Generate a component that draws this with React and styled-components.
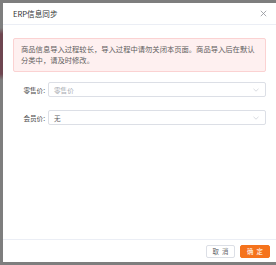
import React from 'react';
import styled, { createGlobalStyle } from 'styled-components';

const GlobalStyle = createGlobalStyle`
  html, body {
    margin: 0;
    padding: 0;
    width: 276px;
    height: 265px;
    overflow: hidden;
    background: linear-gradient(to bottom, #7e7e7e 0px, #7e7e7e 28px, #6e4650 34px, #6e4650 74px, #7e7e7e 80px);
    font-family: "Noto Sans CJK SC", "Liberation Sans", sans-serif;
  }
`;

const Dialog = styled.div`
  margin: 3px 0 0 3px;
  width: 273px;
  height: 259px;
  background: #fff;
  display: flex;
  flex-direction: column;
  box-sizing: border-box;
`;

const Header = styled.div`
  height: 22px;
  border-bottom: 1px solid #ebeef5;
  display: flex;
  align-items: center;
  justify-content: space-between;
  padding: 0 8px 0 10px;
  box-sizing: border-box;
`;

const Title = styled.span`
  font-size: 7.6px;
  color: #303133;
`;

const Close = styled.button`
  border: none;
  background: none;
  padding: 0;
  width: 10px;
  height: 10px;
  display: flex;
  align-items: center;
  justify-content: center;
  cursor: pointer;
`;

const Body = styled.div`
  flex: 1;
  padding: 13px 10px 0 10px;
  display: flex;
  flex-direction: column;
`;

const Alert = styled.div`
  background: #fef0f0;
  border: 1px solid #fbd2d2;
  border-radius: 2px;
  padding: 5px 7px;
  font-size: 7.3px;
  line-height: 11px;
  color: #5e5e5e;
  box-sizing: border-box;
  height: 34px;
`;

const Form = styled.div`
  display: flex;
  flex-direction: column;
  gap: 13px;
  margin-top: 10px;
`;

const Row = styled.div`
  display: flex;
  align-items: center;
`;

const Label = styled.span`
  width: 32px;
  text-align: right;
  font-size: 6.6px;
  color: #4a4a4a;
  padding-right: 3px;
  flex-shrink: 0;
`;

const Select = styled.div`
  flex: 1;
  height: 15px;
  border: 1px solid #dcdfe6;
  border-radius: 2px;
  box-sizing: border-box;
  display: flex;
  align-items: center;
  justify-content: space-between;
  padding: 0 6px 0 5px;
  font-size: 6.6px;
  color: ${(p) => (p.placeholder ? '#a8abb2' : '#606266')};
`;

const Footer = styled.div`
  border-top: 1px solid #ebeef5;
  height: 22px;
  display: flex;
  align-items: center;
  justify-content: flex-end;
  gap: 5px;
  padding: 0 6px 0 0;
`;

const Button = styled.button`
  height: 13px;
  width: ${(p) => (p.primary ? '30px' : '29px')};
  padding: 0 0 0 3px;
  border-radius: 2px;
  border: 1px solid ${(p) => (p.primary ? '#f5731c' : '#dcdfe6')};
  background: ${(p) => (p.primary ? '#f5731c' : '#fff')};
  color: ${(p) => (p.primary ? '#fff' : '#606266')};
  font-size: 6.4px;
  font-family: "Noto Sans CJK SC", sans-serif;
  letter-spacing: 3px;
  display: flex;
  align-items: center;
  justify-content: center;
`;

const Chevron = () => (
  <svg width="6" height="4" viewBox="0 0 6 4">
    <path d="M0.5 0.8 L3 3.2 L5.5 0.8" fill="none" stroke="#c0c4cc" strokeWidth="0.6" />
  </svg>
);

export default function App() {
  return (
    <>
      <GlobalStyle />
      <Dialog>
        <Header>
          <Title>ERP信息同步</Title>
          <Close>
            <svg width="7" height="7" viewBox="0 0 7 7">
              <path d="M0.8 0.8 L6.2 6.2 M6.2 0.8 L0.8 6.2" stroke="#909399" strokeWidth="0.8" />
            </svg>
          </Close>
        </Header>
        <Body>
          <Alert>商品信息导入过程较长，导入过程中请勿关闭本页面。商品导入后在默认分类中，请及时修改。</Alert>
          <Form>
            <Row>
              <Label>零售价:</Label>
              <Select placeholder>
                零售价
                <Chevron />
              </Select>
            </Row>
            <Row>
              <Label>会员价:</Label>
              <Select>
                无
                <Chevron />
              </Select>
            </Row>
          </Form>
        </Body>
        <Footer>
          <Button>取消</Button>
          <Button primary>确定</Button>
        </Footer>
      </Dialog>
    </>
  );
}
